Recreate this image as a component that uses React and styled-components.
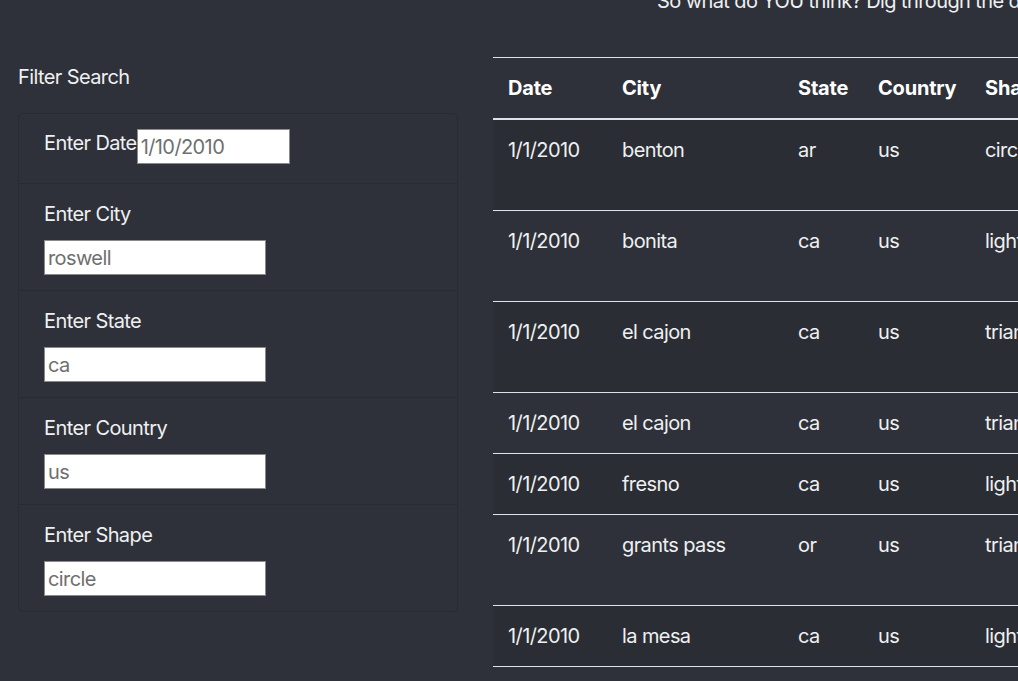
import React from 'react';
import styled, { createGlobalStyle } from 'styled-components';

const sightings = [
  { date: '1/1/2010', city: 'benton', state: 'ar', country: 'us', shape: 'circle', duration: '5 mins.', tall: true },
  { date: '1/1/2010', city: 'bonita', state: 'ca', country: 'us', shape: 'light', duration: '13 minutes', tall: true },
  { date: '1/1/2010', city: 'el cajon', state: 'ca', country: 'us', shape: 'triangle', duration: '5 minutes', tall: true },
  { date: '1/1/2010', city: 'el cajon', state: 'ca', country: 'us', shape: 'triangle', duration: '5 minutes' },
  { date: '1/1/2010', city: 'fresno', state: 'ca', country: 'us', shape: 'light', duration: '2 minutes' },
  { date: '1/1/2010', city: 'grants pass', state: 'or', country: 'us', shape: 'triangle', duration: '2 minutes', tall: true },
  { date: '1/1/2010', city: 'la mesa', state: 'ca', country: 'us', shape: 'light', duration: '10 minutes' },
  { date: '1/1/2010', city: 'la mesa', state: 'ca', country: 'us', shape: 'light', duration: '10 minutes' },
];

const filters = [
  { id: 'datetime', label: 'Enter Date', placeholder: '1/10/2010', inline: true },
  { id: 'city', label: 'Enter City', placeholder: 'roswell' },
  { id: 'state', label: 'Enter State', placeholder: 'ca' },
  { id: 'country', label: 'Enter Country', placeholder: 'us' },
  { id: 'shape', label: 'Enter Shape', placeholder: 'circle' },
];

const App = () => {
  return (
    <>
      <GlobalStyle />
      <Page>
        <Intro>So what do YOU think? Dig through the data and see for yourself what's out there!</Intro>
        <Main>
          <Sidebar>
            <Heading>Filter Search</Heading>
            <FilterList>
              {filters.map(f => (
                <FilterItem key={f.id} inline={f.inline}>
                  <Label htmlFor={f.id} inline={f.inline}>{f.label}</Label>
                  <Input id={f.id} type="text" placeholder={f.placeholder} inline={f.inline} />
                </FilterItem>
              ))}
            </FilterList>
          </Sidebar>
          <TableWrap>
            <Table>
              <colgroup>
                <col style={{ width: '114px' }} />
                <col style={{ width: '176px' }} />
                <col style={{ width: '80px' }} />
                <col style={{ width: '107px' }} />
                <col style={{ width: '150px' }} />
                <col style={{ width: '150px' }} />
                <col style={{ width: '320px' }} />
              </colgroup>
              <thead>
                <tr>
                  <Th>Date</Th>
                  <Th>City</Th>
                  <Th>State</Th>
                  <Th>Country</Th>
                  <Th>Shape</Th>
                  <Th>Duration</Th>
                  <Th>Comments</Th>
                </tr>
              </thead>
              <tbody>
                {sightings.map((s, i) => (
                  <Row key={i} striped={i % 2 === 0}>
                    <Td tall={s.tall}>{s.date}</Td>
                    <Td tall={s.tall}>{s.city}</Td>
                    <Td tall={s.tall}>{s.state}</Td>
                    <Td tall={s.tall}>{s.country}</Td>
                    <Td tall={s.tall}>{s.shape}</Td>
                    <Td tall={s.tall}>{s.duration}</Td>
                    <Td tall={s.tall}>lights in the sky</Td>
                  </Row>
                ))}
              </tbody>
            </Table>
          </TableWrap>
        </Main>
      </Page>
    </>
  );
};

const GlobalStyle = createGlobalStyle`
  html {
    font-size: 20px;
  }
  body {
    margin: 0;
    background: #2e3139;
    color: #eef0f2;
    font-family: Inter, "Noto Sans", sans-serif;
    letter-spacing: -0.6px;
    overflow: hidden;
  }
`
const Page = styled.div`
  width: 1018px;
  height: 681px;
  overflow: hidden;
`
const Intro = styled.p`
  margin: -14px 0 41px 657px;
  font-size: 20px;
  line-height: 30px;
  white-space: nowrap;
`
const Main = styled.div`
  display: grid;
  grid-template-columns: 440px 1fr;
  gap: 35px;
  padding-left: 18px;
`
const Sidebar = styled.div`
  display: flex;
  flex-direction: column;
`
const Heading = styled.div`
  margin-top: 5px;
  font-size: 20px;
  line-height: 30px;
`
const FilterList = styled.ul`
  list-style: none;
  margin: 21px 0 0;
  padding: 0;
  border: 1px solid #282b31;
  border-radius: 5px;
`
const FilterItem = styled.li`
  display: flex;
  flex-direction: ${p => (p.inline ? 'row' : 'column')};
  align-items: flex-start;
  height: ${p => (p.inline ? '39px' : '76px')};
  padding: 15px 25px;
  & + & {
    border-top: 1px solid #282b31;
  }
`
const Label = styled.label`
  font-size: 20px;
  line-height: 30px;
  margin-top: ${p => (p.inline ? '-1px' : '0')};
  margin-bottom: ${p => (p.inline ? '0' : '11px')};
`
const Input = styled.input`
  box-sizing: border-box;
  width: ${p => (p.inline ? '153px' : '222px')};
  height: 35px;
  padding: 0 3px;
  border: 1px solid #8a8a8a;
  background: #fff;
  font-family: Inter, "Noto Sans", sans-serif;
  font-size: 20px;
  letter-spacing: -0.6px;
  color: #333;
  outline: none;
  &::placeholder {
    color: #6f6f6f;
  }
`
const TableWrap = styled.div`
  min-width: 0;
`
const Table = styled.table`
  table-layout: fixed;
  width: 1097px;
  border-collapse: collapse;
  font-size: 20px;
  line-height: 30px;
  text-align: left;
`
const Th = styled.th`
  padding: 15px;
  font-weight: 700;
  letter-spacing: -0.2px;
  color: #fff;
  white-space: nowrap;
  border-top: 1px solid #dee2e6;
  border-bottom: 2px solid #dee2e6;
`
const Row = styled.tr`
  background: ${p => (p.striped ? '#2a2d33' : 'transparent')};
`
const Td = styled.td`
  vertical-align: top;
  white-space: nowrap;
  padding: 15px 15px ${p => (p.tall ? '45px' : '15px')};
  border-top: 1px solid #dee2e6;
`

export default App;
